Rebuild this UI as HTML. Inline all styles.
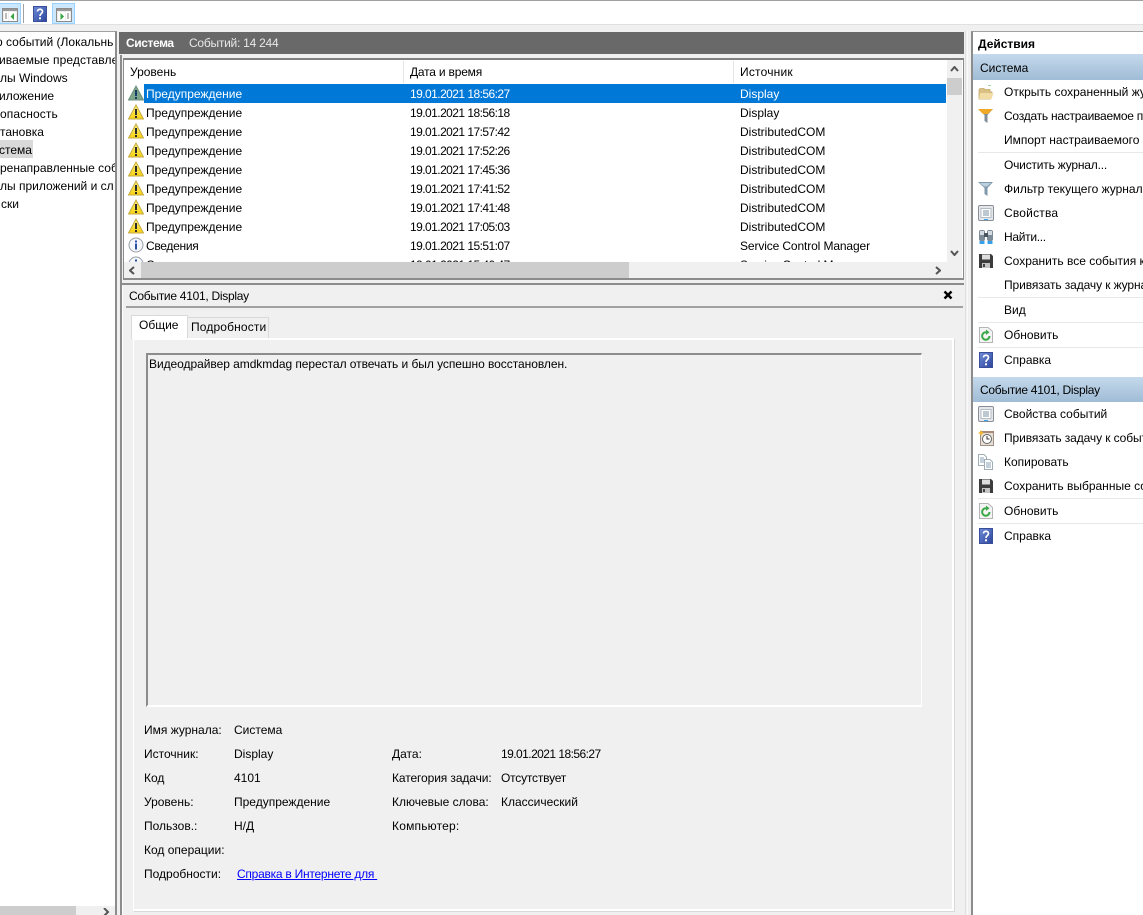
<!DOCTYPE html>
<html lang="ru"><head><meta charset="utf-8"><title>Просмотр событий</title>
<style>
html,body{margin:0;padding:0;overflow:hidden}
body{width:1143px;height:915px;position:relative;overflow:hidden;background:#f0f0f0;font:12px/16px "Liberation Sans",sans-serif;color:#000}
.b{position:absolute}
.t{position:absolute;white-space:nowrap;line-height:16px;font-size:12px}
.d{letter-spacing:-.55px}
.w{color:#fff}
svg.i{position:absolute;width:16px;height:16px}
</style></head><body>
<svg width="0" height="0" style="position:absolute"><defs>
<linearGradient id="gy" x1="0" y1="0" x2="0" y2="1"><stop offset="0" stop-color="#fff27a"/><stop offset="1" stop-color="#f6d010"/></linearGradient>
<linearGradient id="gb" x1="0" y1="0" x2="1" y2="1"><stop offset="0" stop-color="#6d8bd8"/><stop offset="1" stop-color="#2c459c"/></linearGradient>
<symbol id="w" viewBox="0 0 16 16"><path d="M8 1 15.500 15H.5Z" fill="url(#gy)" stroke="#c4ab44"/><rect x="7" y="5" width="2" height="6" fill="#2a2a2a"/><rect x="7" y="12" width="2" height="2" fill="#2a2a2a"/></symbol>
<symbol id="ws" viewBox="0 0 16 16"><path d="M8 1 15.500 15H.5Z" fill="#7ea58a" stroke="#6b9280"/><rect x="7" y="5" width="2" height="6" fill="#123c6a"/><rect x="7" y="12" width="2" height="2" fill="#123c6a"/></symbol>
<symbol id="inf" viewBox="0 0 16 16"><circle cx="8" cy="8" r="7" fill="#f4f6fa" stroke="#9a9fa8"/><rect x="7" y="3.500" width="2" height="2" fill="#2a4fa8"/><rect x="7" y="6.500" width="2" height="6" fill="#2a4fa8"/></symbol>
<symbol id="help" viewBox="0 0 16 16"><rect x="1.500" y="0.500" width="13" height="15" fill="url(#gb)" stroke="#3a4f98"/><path d="M5.500 5.500C5.500 2.500 10.500 2.500 10.500 5.500 10.500 7.500 8 7.500 8 10" fill="none" stroke="#fff" stroke-width="1.700"/><rect x="7" y="11.300" width="2" height="2" fill="#fff"/></symbol>
<symbol id="ref" viewBox="0 0 16 16"><path d="M1.500.5H10L14.500 4.500V15.500H1.500Z" fill="#f4f4f4" stroke="#b4b4b4"/><path d="M11.500 9A3.700 3.700 0 1 1 8 5.300" fill="none" stroke="#3aa846" stroke-width="2"/><path d="M8 2.500 11.500 5.300 8 8Z" fill="#3aa846"/></symbol>
<symbol id="sav" viewBox="0 0 16 16"><path d="M1 1H13L15 3V15H1Z" fill="#3c3c3c"/><rect x="4" y="1.500" width="8" height="5" fill="#dcdcdc"/><rect x="4" y="10" width="8" height="5" fill="#c4c4c4"/><rect x="5" y="11" width="2" height="3" fill="#444"/></symbol>
<symbol id="prop" viewBox="0 0 16 16"><rect x=".5" y=".5" width="15" height="15" rx="1.500" fill="#e4e8ec" stroke="#8a8f96"/><rect x="3" y="3.500" width="10" height="9" fill="#fff" stroke="#b4bcc4"/><path d="M5 6H11M5 8H11M5 10H11" stroke="#7a90a6"/><rect x="6" y="14" width="4" height="1" fill="#38a8e8"/></symbol>
<symbol id="flt" viewBox="0 0 16 16"><path d="M0 1H15L9.500 7V15L6.500 13V7Z" fill="#7d98aa"/><path d="M2 2H13L9 5.500H6Z" fill="#bccfdc"/></symbol>
<symbol id="fltc" viewBox="0 0 16 16"><path d="M0 1H15L9.500 7V15L6.500 13V7Z" fill="#7f8e98"/><path d="M0 1H15L10 6H5Z" fill="#f0a828"/></symbol>
<symbol id="open" viewBox="0 0 16 16"><path d="M1 5 2 3.500H6L7 4.500H12V7H14L12.500 14H1Z" fill="#d9c084" stroke="#c4a868" stroke-width=".8"/><path d="M2 8H15.500L13.500 14H1Z" fill="#f0dca4"/><path d="M10 0H13" stroke="#4aa84a"/></symbol>
<symbol id="find" viewBox="0 0 16 16"><rect x="1" y="1" width="6" height="11" rx="2" fill="#7d8b96"/><rect x="9" y="1" width="6" height="11" rx="2" fill="#7d8b96"/><rect x="6" y="4" width="4" height="4" fill="#48545e"/><rect x="2" y="2" width="4" height="4" fill="#d4dce2"/><rect x="10" y="2" width="4" height="4" fill="#d4dce2"/><rect x="1.500" y="12" width="5" height="3" fill="#38a0e8"/><rect x="9.500" y="12" width="5" height="3" fill="#38a0e8"/></symbol>
<symbol id="task" viewBox="0 0 16 16"><rect x="2.500" y="1.500" width="13" height="14" fill="#e4ded4" stroke="#a09088"/><rect x="2" y="1" width="14" height="2" fill="#a88a7a"/><circle cx="9" cy="9" r="4.500" fill="#fff" stroke="#666"/><path d="M9 6V9H11.500" fill="none" stroke="#333"/><path d="M3 0 4 2 6 3 4 4 3 6 2 4 0 3 2 2Z" fill="#f4b82c"/></symbol>
<symbol id="copy" viewBox="0 0 16 16"><path d="M.5.5H6L8.500 3V11.500H.5Z" fill="#fff" stroke="#a0aeb8"/><path d="M6.500 5.500H12L14.500 8V15.500H6.500Z" fill="#fff" stroke="#a0aeb8"/><path d="M8 9H13M8 11H13M8 13H13M2 4H6M2 6H6M2 8H6" stroke="#8aa2b8"/></symbol>
</defs></svg>

<!-- toolbar -->
<div class="b" style="left:0;top:0;width:1143px;height:1px;background:#a0a0a0"></div>
<div class="b" style="left:0;top:1px;width:1143px;height:24px;background:#fff;border-bottom:1px solid #e0e0e0;box-sizing:border-box"></div>
<div class="b" style="left:0;top:3px;width:21px;height:21px;background:#cce8ff;border:1px solid #99d1ff;border-left:0;box-sizing:border-box"></div>
<svg class="b" style="left:2px;top:8px" width="16" height="15"><rect x=".5" y=".5" width="15" height="13" fill="#eee" stroke="#8c8c8c"/><rect x="1" y="1" width="14" height="2" fill="#999"/><rect x="2" y="4" width="4" height="9" fill="#fff"/><path d="M3 6H5M3 8H5M3 10H5" stroke="#777"/><rect x="7" y="4" width="7" height="9" fill="#fff"/><path d="M8.500 8.500 12 5V12Z" fill="#35a63f"/></svg>
<div class="b" style="left:23px;top:4px;width:1px;height:19px;background:#a0a0a0"></div>
<svg class="i" style="left:32px;top:6px"><use href="#help"/></svg>
<div class="b" style="left:52px;top:3px;width:23px;height:21px;background:#cce8ff;border:1px solid #99d1ff;box-sizing:border-box"></div>
<svg class="b" style="left:56px;top:8px" width="16" height="15"><rect x=".5" y=".5" width="15" height="13" fill="#eee" stroke="#8c8c8c"/><rect x="1" y="1" width="14" height="2" fill="#999"/><rect x="2" y="4" width="7" height="9" fill="#fff"/><path d="M8 8.500 4.500 5V12Z" fill="#35a63f"/><rect x="10" y="4" width="4" height="9" fill="#fff"/><path d="M11 6H13M11 8H13M11 10H13" stroke="#777"/></svg>

<!-- left pane -->
<div class="b" style="left:0;top:31px;width:115px;height:884px;background:#fff;border-right:2px solid #8c8c8c;border-top:1px solid #a0a0a0;overflow:hidden">
<div class="b" style="left:0;top:108px;width:33px;height:18px;background:#d9d9d9"></div>
<div class="t" style="left:-4px;top:2px">р событий (Локальнь</div>
<div class="t" style="left:-1px;top:20px;letter-spacing:.1px">иваемые представле</div>
<div class="t" style="left:0;top:38px">лы Windows</div>
<div class="t" style="left:-1px;top:56px">иложение</div>
<div class="t" style="left:0;top:74px;letter-spacing:.1px">опасность</div>
<div class="t" style="left:0;top:92px">тановка</div>
<div class="t" style="left:-1px;top:110px">стема</div>
<div class="t" style="left:0;top:128px">ренаправленные соб</div>
<div class="t" style="left:0;top:146px">лы приложений и сл</div>
<div class="t" style="left:1px;top:164px">ски</div>
<div class="b" style="left:0;top:874px;width:76px;height:10px;background:#cdcdcd"></div>
<div class="b" style="left:76px;top:874px;width:39px;height:10px;background:#f0f0f0"></div>
<svg class="b" style="left:103px;top:876px" width="8" height="8"><path d="M1 0 5 4 1 8" fill="none" stroke="#555" stroke-width="2"/></svg>
</div>

<!-- center header -->
<div class="b" style="left:120px;top:55px;width:2px;height:860px;background:#8c8c8c"></div>
<div class="b" style="left:119px;top:32px;width:845px;height:22px;background:#696969"></div>
<div class="t w" style="left:126px;top:35px;font-weight:bold;letter-spacing:-.4px">Система</div>
<div class="t" style="left:189px;top:35px;color:#e8e8e8;letter-spacing:-.25px">Событий: 14 244</div>

<!-- list panel -->
<div class="b" style="left:123px;top:58px;width:841px;height:222px;border:1px solid #8c8c8c;border-top:2px solid #808080;border-bottom:2px solid #8c8c8c;box-sizing:border-box;background:#fff"></div>
<div class="b" style="left:124px;top:60px;width:838px;height:202px;overflow:hidden;background:#fff">
<div class="b" style="left:279px;top:1px;width:1px;height:22px;background:#e5e5e5"></div>
<div class="b" style="left:609px;top:1px;width:1px;height:22px;background:#e5e5e5"></div>
<div class="t" style="left:6px;top:4px">Уровень</div>
<div class="t" style="left:286px;top:4px;letter-spacing:-.2px">Дата и время</div>
<div class="t" style="left:616px;top:4px;letter-spacing:.2px">Источник</div>
<div class="b" style="left:20px;top:24px;width:802px;height:19px;background:#0078d7"></div>

<svg class="i" style="left:4px;top:25px"><use href="#ws"/></svg>
<div class="t w" style="left:22px;top:26px">Предупреждение</div>
<div class="t w d" style="left:286px;top:26px">19.01.2021 18:56:27</div>
<div class="t w" style="left:616px;top:26px">Display</div>

<svg class="i" style="left:4px;top:44px"><use href="#w"/></svg>
<div class="t" style="left:22px;top:45px">Предупреждение</div>
<div class="t d" style="left:286px;top:45px">19.01.2021 18:56:18</div>
<div class="t" style="left:616px;top:45px">Display</div>

<svg class="i" style="left:4px;top:63px"><use href="#w"/></svg>
<div class="t" style="left:22px;top:64px">Предупреждение</div>
<div class="t d" style="left:286px;top:64px">19.01.2021 17:57:42</div>
<div class="t" style="left:616px;top:64px">DistributedCOM</div>

<svg class="i" style="left:4px;top:82px"><use href="#w"/></svg>
<div class="t" style="left:22px;top:83px">Предупреждение</div>
<div class="t d" style="left:286px;top:83px">19.01.2021 17:52:26</div>
<div class="t" style="left:616px;top:83px">DistributedCOM</div>

<svg class="i" style="left:4px;top:101px"><use href="#w"/></svg>
<div class="t" style="left:22px;top:102px">Предупреждение</div>
<div class="t d" style="left:286px;top:102px">19.01.2021 17:45:36</div>
<div class="t" style="left:616px;top:102px">DistributedCOM</div>

<svg class="i" style="left:4px;top:120px"><use href="#w"/></svg>
<div class="t" style="left:22px;top:121px">Предупреждение</div>
<div class="t d" style="left:286px;top:121px">19.01.2021 17:41:52</div>
<div class="t" style="left:616px;top:121px">DistributedCOM</div>

<svg class="i" style="left:4px;top:139px"><use href="#w"/></svg>
<div class="t" style="left:22px;top:140px">Предупреждение</div>
<div class="t d" style="left:286px;top:140px">19.01.2021 17:41:48</div>
<div class="t" style="left:616px;top:140px">DistributedCOM</div>

<svg class="i" style="left:4px;top:158px"><use href="#w"/></svg>
<div class="t" style="left:22px;top:159px">Предупреждение</div>
<div class="t d" style="left:286px;top:159px">19.01.2021 17:05:03</div>
<div class="t" style="left:616px;top:159px">DistributedCOM</div>

<svg class="i" style="left:4px;top:177px"><use href="#inf"/></svg>
<div class="t" style="left:22px;top:178px;letter-spacing:-.3px">Сведения</div>
<div class="t d" style="left:286px;top:178px">19.01.2021 15:51:07</div>
<div class="t" style="left:616px;top:178px;letter-spacing:-.12px">Service Control Manager</div>

<svg class="i" style="left:4px;top:196px"><use href="#inf"/></svg>
<div class="t" style="left:22px;top:197px;letter-spacing:-.3px">Сведения</div>
<div class="t d" style="left:286px;top:197px">19.01.2021 15:40:47</div>
<div class="t" style="left:616px;top:197px;letter-spacing:-.12px">Service Control Manager</div>
</div>
<!-- list scrollbars -->
<div class="b" style="left:947px;top:60px;width:15px;height:202px;background:#f0f0f0"></div>
<div class="b" style="left:947px;top:78px;width:15px;height:17px;background:#cdcdcd"></div>
<svg class="b" style="left:950px;top:66px" width="9" height="6"><path d="M1 5 4.500 1 8 5" fill="none" stroke="#555" stroke-width="2"/></svg>
<svg class="b" style="left:950px;top:250px" width="9" height="6"><path d="M1 1 4.500 5 8 1" fill="none" stroke="#555" stroke-width="2"/></svg>
<div class="b" style="left:124px;top:262px;width:838px;height:16px;background:#f0f0f0"></div>
<div class="b" style="left:141px;top:262px;width:488px;height:16px;background:#cdcdcd"></div>
<svg class="b" style="left:129px;top:266px" width="6" height="9"><path d="M5 1 1 4.500 5 8" fill="none" stroke="#555" stroke-width="2"/></svg>
<svg class="b" style="left:935px;top:266px" width="6" height="9"><path d="M1 1 5 4.500 1 8" fill="none" stroke="#555" stroke-width="2"/></svg>

<!-- detail panel -->
<div class="b" style="left:122px;top:283px;width:842px;height:2px;background:#8c8c8c"></div>
<div class="b" style="left:122px;top:285px;width:1px;height:630px;background:#fff"></div>
<div class="b" style="left:965px;top:31px;width:1px;height:884px;background:#e0e0e0"></div>
<div class="b" style="left:967px;top:31px;width:1px;height:884px;background:#fafafa"></div>
<div class="t" style="left:129px;top:288px;letter-spacing:-.28px">Событие 4101, Display</div>
<svg class="b" style="left:943px;top:290px" width="10" height="10"><path d="M1.500 1.500 8.500 8.500M8.500 1.500 1.500 8.500" stroke="#000" stroke-width="2.400"/></svg>
<div class="b" style="left:126px;top:306px;width:837px;height:2px;background:#a0a0a0"></div>

<div class="b" style="left:133px;top:338px;width:821px;height:573px;border:2px solid #fff;border-top:0;border-left:1px solid #fff;box-shadow:1px 1px 0 #d9d9d9;box-sizing:border-box"></div>
<div class="b" style="left:187px;top:317px;width:82px;height:21px;background:#f0f0f0;border:1px solid #d9d9d9;border-bottom:0;box-sizing:border-box"></div>
<div class="t" style="left:191px;top:319px;letter-spacing:.15px">Подробности</div>
<div class="b" style="left:131px;top:315px;width:57px;height:24px;background:#fff;border:1px solid #d9d9d9;border-bottom:0;box-sizing:border-box"></div>
<div class="t" style="left:139px;top:317px">Общие</div>
<div class="b" style="left:134px;top:338px;width:820px;height:2px;background:#fff"></div>

<div class="b" style="left:146px;top:353px;width:776px;height:354px;border-top:2px solid #8c8c8c;border-left:2px solid #8c8c8c;border-right:1px solid #fff;border-bottom:2px solid #fff;box-sizing:border-box;background:#f0f0f0"></div>
<div class="t" style="left:149px;top:356px;letter-spacing:-.05px">Видеодрайвер amdkmdag перестал отвечать и был успешно восстановлен.</div>

<div class="t" style="left:144px;top:722px">Имя журнала:</div><div class="t" style="left:234px;top:722px">Система</div>
<div class="t" style="left:144px;top:746px">Источник:</div><div class="t" style="left:234px;top:746px">Display</div>
<div class="t" style="left:392px;top:746px">Дата:</div><div class="t d" style="left:501px;top:746px">19.01.2021 18:56:27</div>
<div class="t" style="left:144px;top:770px">Код</div><div class="t" style="left:234px;top:770px">4101</div>
<div class="t" style="left:392px;top:770px;letter-spacing:-.1px">Категория задачи:</div><div class="t" style="left:501px;top:770px;letter-spacing:-.2px">Отсутствует</div>
<div class="t" style="left:144px;top:794px">Уровень:</div><div class="t" style="left:234px;top:794px">Предупреждение</div>
<div class="t" style="left:392px;top:794px">Ключевые слова:</div><div class="t" style="left:501px;top:794px">Классический</div>
<div class="t" style="left:144px;top:818px">Пользов.:</div><div class="t" style="left:234px;top:818px">Н/Д</div>
<div class="t" style="left:392px;top:818px;letter-spacing:.2px">Компьютер:</div>
<div class="t" style="left:144px;top:842px">Код операции:</div>
<div class="t" style="left:144px;top:866px">Подробности:</div>
<div class="t" style="left:237px;top:866px;letter-spacing:-.25px;color:#00f;text-decoration:underline">Справка в Интернете для&nbsp;</div>

<!-- actions pane -->
<div class="b" style="left:971px;top:31px;width:172px;height:884px;background:#fff;border-left:2px solid #8c8c8c;border-top:1px solid #a0a0a0;box-sizing:border-box;overflow:hidden">
<div class="t" style="left:5px;top:4px;font-weight:bold">Действия</div>
<div class="b" style="left:0;top:22px;width:170px;height:26px;background:linear-gradient(#c4d9ec,#a0bcd6)"></div>
<div class="t" style="left:7px;top:28px">Система</div>
<div class="b" style="left:0;top:345px;width:170px;height:25px;background:linear-gradient(#c4d9ec,#a0bcd6)"></div>
<div class="t" style="left:7px;top:350px;letter-spacing:-.28px">Событие 4101, Display</div>

<div class="b" style="left:5px;top:120px;width:165px;height:1px;background:#e8e8e8"></div>
<div class="b" style="left:5px;top:265px;width:165px;height:1px;background:#e8e8e8"></div>
<div class="b" style="left:5px;top:290px;width:165px;height:1px;background:#e8e8e8"></div>
<div class="b" style="left:5px;top:315px;width:165px;height:1px;background:#e8e8e8"></div>
<div class="b" style="left:5px;top:466px;width:165px;height:1px;background:#e8e8e8"></div>
<div class="b" style="left:5px;top:491px;width:165px;height:1px;background:#e8e8e8"></div>

<svg class="i" style="left:5px;top:53px"><use href="#open"/></svg><div class="t" style="left:31px;top:52px">Открыть сохраненный жу</div>
<svg class="i" style="left:5px;top:76px"><use href="#fltc"/></svg><div class="t" style="left:31px;top:76px;letter-spacing:-.25px">Создать настраиваемое п</div>
<div class="t" style="left:31px;top:100px">Импорт настраиваемого п</div>
<div class="t" style="left:31px;top:125px;letter-spacing:-.2px">Очистить журнал...</div>
<svg class="i" style="left:5px;top:149px"><use href="#flt"/></svg><div class="t" style="left:31px;top:149px">Фильтр текущего журнал</div>
<svg class="i" style="left:5px;top:173px"><use href="#prop"/></svg><div class="t" style="left:31px;top:173px;letter-spacing:.2px">Свойства</div>
<svg class="i" style="left:5px;top:197px"><use href="#find"/></svg><div class="t" style="left:31px;top:197px;letter-spacing:-.3px">Найти...</div>
<svg class="i" style="left:5px;top:221px"><use href="#sav"/></svg><div class="t" style="left:31px;top:221px">Сохранить все события к</div>
<div class="t" style="left:31px;top:245px;letter-spacing:-.1px">Привязать задачу к журна</div>
<div class="t" style="left:31px;top:270px">Вид</div>
<svg class="i" style="left:5px;top:295px"><use href="#ref"/></svg><div class="t" style="left:31px;top:295px">Обновить</div>
<svg class="i" style="left:5px;top:320px"><use href="#help"/></svg><div class="t" style="left:31px;top:320px">Справка</div>
<svg class="i" style="left:5px;top:374px"><use href="#prop"/></svg><div class="t" style="left:31px;top:374px">Свойства событий</div>
<svg class="i" style="left:5px;top:398px"><use href="#task"/></svg><div class="t" style="left:31px;top:398px;letter-spacing:-.1px">Привязать задачу к событ</div>
<svg class="i" style="left:5px;top:422px"><use href="#copy"/></svg><div class="t" style="left:31px;top:422px">Копировать</div>
<svg class="i" style="left:5px;top:446px"><use href="#sav"/></svg><div class="t" style="left:31px;top:446px">Сохранить выбранные со</div>
<svg class="i" style="left:5px;top:471px"><use href="#ref"/></svg><div class="t" style="left:31px;top:471px">Обновить</div>
<svg class="i" style="left:5px;top:496px"><use href="#help"/></svg><div class="t" style="left:31px;top:496px">Справка</div>
</div>
</body></html>
